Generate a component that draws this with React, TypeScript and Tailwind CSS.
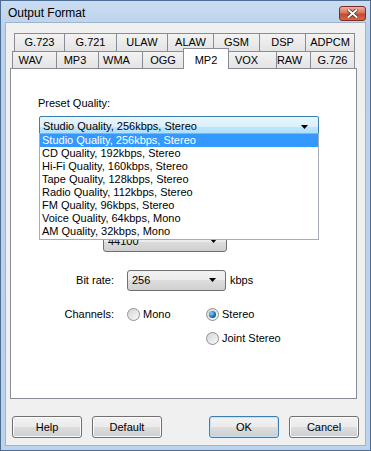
import type { ReactNode } from 'react';

const FONT = "font-['Liberation_Sans',Arial,sans-serif]";

const TOP_TABS: { label: string; w: string }[] = [
  { label: 'G.723', w: 'w-[51px]' },
  { label: 'G.721', w: 'w-[53px]' },
  { label: 'ULAW', w: 'w-[52px]' },
  { label: 'ALAW', w: 'w-[47px]' },
  { label: 'GSM', w: 'w-[47px]' },
  { label: 'DSP', w: 'w-[47px]' },
  { label: 'ADPCM', w: 'w-[50px]' },
];

const BOTTOM_TABS: { label: string; w: string; pad: string }[] = [
  { label: 'WAV', w: 'w-[45px]', pad: 'pr-[8px]' },
  { label: 'MP3', w: 'w-[43px]', pad: 'pr-[5px]' },
  { label: 'WMA', w: 'w-[45px]', pad: 'pr-[8px]' },
  { label: 'OGG', w: 'w-[42px]', pad: 'pr-0' },
  { label: 'MP2', w: 'w-[46px]', pad: 'pr-0' },
  { label: 'VOX', w: 'w-[49px]', pad: 'pr-[12px]' },
  { label: 'RAW', w: 'w-[35px]', pad: 'pr-[8px]' },
  { label: 'G.726', w: 'w-[45px]', pad: 'pr-0' },
];

const PRESETS = [
  'Studio Quality, 256kbps, Stereo',
  'CD Quality, 192kbps, Stereo',
  'Hi-Fi Quality, 160kbps, Stereo',
  'Tape Quality, 128kbps, Stereo',
  'Radio Quality, 112kbps, Stereo',
  'FM Quality, 96kbps, Stereo',
  'Voice Quality, 64kbps, Mono',
  'AM Quality, 32kbps, Mono',
];

const BTN_BG = 'bg-[linear-gradient(#f2f2f2,#ebebeb_50%,#dddddd_50%,#cfcfcf)]';

function Arrow() {
  return (
    <svg width="7" height="4" viewBox="0 0 7 4" className="shrink-0">
      <path d="M0 0h7L3.5 4z" fill="#000" />
    </svg>
  );
}

function Combo({ value, w }: { value: string; w: string }) {
  return (
    <div
      className={`${w} h-[21px] flex items-center justify-between pl-[4px] pr-[9px] rounded-[3px] border border-[#707070] ${BTN_BG} text-[11px] text-black`}
    >
      <span>{value}</span>
      <Arrow />
    </div>
  );
}

function Radio({ checked, children }: { checked?: boolean; children: ReactNode }) {
  return (
    <div className="flex items-center gap-[3px] h-[13px] leading-[13px] text-[11px] text-black">
      <span className="w-[13px] h-[13px] rounded-full border border-[#8e8f8f] bg-[linear-gradient(135deg,#d4d4d4,#fafafa)] flex items-center justify-center">
        {checked && (
          <span className="w-[7px] h-[7px] rounded-full bg-[radial-gradient(circle_at_35%_35%,#8ad2ff,#1a6fb5_55%,#0d3f73)]" />
        )}
      </span>
      <span>{children}</span>
    </div>
  );
}

function Button({ label, def }: { label: string; def?: boolean }) {
  return (
    <div
      className={`w-[70px] h-[22px] flex items-center justify-center rounded-[3px] border text-[11px] text-black ${BTN_BG} ${
        def ? 'border-[#3c7fb1] shadow-[inset_0_0_0_1px_#bfe3f8]' : 'border-[#707070] shadow-[inset_0_0_0_1px_#fbfbfb]'
      }`}
    >
      {label}
    </div>
  );
}

export default function App() {
  return (
    <div
      className={`${FONT} w-[371px] h-[451px] flex flex-col border border-[#4d6c91] bg-[linear-gradient(#c9dcf1,#bad1eb_30px,#bcd3ec)]`}
    >
      {/* Title bar */}
      <div className="h-[21px] flex items-center justify-between pl-[7px] pr-[4px]">
        <span className="text-[12px] text-black pt-[2px]">Output Format</span>
        <div className="w-[27px] h-[15px] mt-[4px] rounded-[3px] border border-[#7e2d22] bg-[linear-gradient(#eab0a4,#d7745f_45%,#c24a30_55%,#d26a4c)] flex items-center justify-center">
          <svg width="11" height="9" viewBox="0 0 11 9">
            <path d="M1.5 1l8 7M9.5 1l-8 7" stroke="#5a1c12" strokeWidth="3.4" strokeLinecap="square" />
            <path d="M1.5 1l8 7M9.5 1l-8 7" stroke="#fff" strokeWidth="2" strokeLinecap="square" />
          </svg>
        </div>
      </div>

      {/* Client */}
      <div className="mx-[4px] mb-[4px] flex-1 bg-[#f0f0f0] border border-[#9fb4cd] flex flex-col">
        <div className="pt-[10px]">
          <div className="flex ml-[8px] h-[18px]">
            {TOP_TABS.map((t, i) => (
              <div
                key={t.label}
                className={`${t.w} ${i > 0 ? '-ml-px' : ''} h-full flex items-center justify-center border border-b-0 border-[#898c95] bg-[linear-gradient(#f3f3f3,#e3e3e3)] text-[11px] text-black`}
              >
                {t.label}
              </div>
            ))}
          </div>
          <div className="relative z-10 flex items-end ml-[6px] h-[17px]">
            {BOTTOM_TABS.map((t, i) =>
              t.label === 'MP2' ? (
                <div
                  key={t.label}
                  className={`${t.w} -ml-px -mb-px h-[21px] flex items-start justify-center pt-[3px] border border-b-0 border-[#898c95] bg-white text-[11px] text-black`}
                >
                  {t.label}
                </div>
              ) : (
                <div
                  key={t.label}
                  className={`${t.w} ${t.pad} ${i > 0 ? '-ml-px' : ''} h-full flex items-center justify-center border border-b-0 border-[#898c95] bg-[linear-gradient(#f3f3f3,#e3e3e3)] text-[11px] text-black`}
                >
                  {t.label}
                </div>
              )
            )}
          </div>
        </div>

        {/* Panel */}
        <div className="relative ml-[4px] w-[347px] h-[331px] bg-white border border-[#898c95] pl-[27px] pt-[26px] text-[11px] text-black">
          <div>Preset Quality:</div>
          <div className="mt-[4px] ml-[1px] w-[280px] h-[22px] flex items-center justify-between pl-[3px] pr-[10px] rounded-[2px] border border-[#3c7fb1] bg-[linear-gradient(#eaf6fd,#d9f0fc_50%,#bee6fd_50%,#a7d9f5)]">
            <span className="text-[11px]">Studio Quality, 256kbps, Stereo</span>
            <Arrow />
          </div>

          {/* Sample rate combo, mostly hidden below the open list */}
          <div className="mt-[93px] ml-[65px]">
            <Combo value="44100" w="w-[124px]" />
          </div>

          <div className="mt-[18px] flex items-center">
            <div className="w-[76px] text-right">Bit rate:</div>
            <div className="ml-[13px]">
              <Combo value="256" w="w-[99px]" />
            </div>
            <span className="ml-[4px]">kbps</span>
          </div>

          <div className="mt-[17px] flex">
            <div className="w-[76px] text-right leading-[13px]">Channels:</div>
            <div className="ml-[13px] w-[79px]">
              <Radio>Mono</Radio>
            </div>
            <div className="flex flex-col gap-[11px]">
              <Radio checked>Stereo</Radio>
              <Radio>Joint Stereo</Radio>
            </div>
          </div>

          {/* Open dropdown list */}
          <div className="absolute left-[28px] top-[64px] w-[280px] h-[107px] bg-white border border-[#a5acb5] z-20">
            {PRESETS.map((p, i) => (
              <div
                key={p}
                className={`h-[13px] leading-[13px] pl-[2px] text-[11px] ${i === 0 ? 'bg-[#3399ff] text-white' : 'text-black'}`}
              >
                {p}
              </div>
            ))}
          </div>
        </div>

        {/* Buttons */}
        <div className="mt-[17px] flex pl-[6px]">
          <Button label="Help" />
          <div className="ml-[10px]">
            <Button label="Default" />
          </div>
          <div className="ml-[47px]">
            <Button label="OK" def />
          </div>
          <div className="ml-[10px]">
            <Button label="Cancel" />
          </div>
        </div>
      </div>
    </div>
  );
}
